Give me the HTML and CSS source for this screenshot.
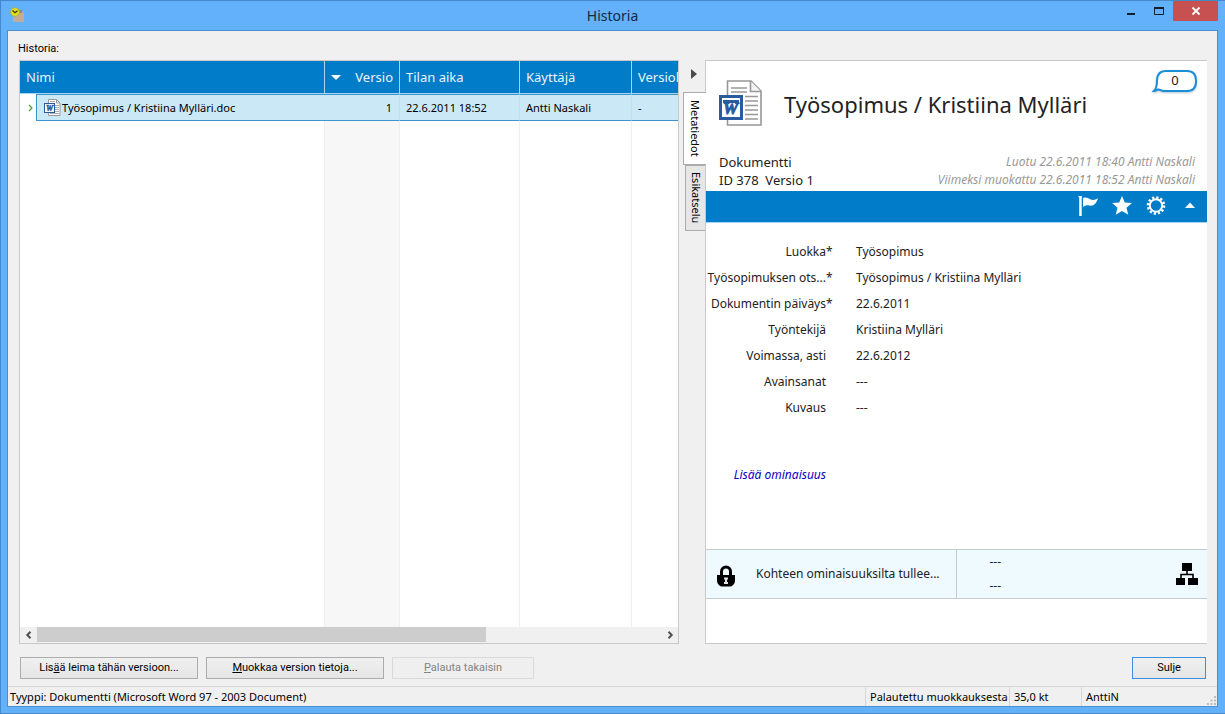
FILE: index.html
```
<!DOCTYPE html>
<html lang="fi">
<head>
<meta charset="utf-8">
<title>Historia</title>
<link rel="stylesheet" href="styles.css">
</head>
<body>
<div class="window">
  <header class="titlebar">
    <svg class="app-icon" viewBox="0 0 16 16" aria-hidden="true">
      <path d="M4 5h11v10H4z" fill="#c4ab98"/><path d="M10 3h3v3h-3z" fill="#8c8a82"/>
      <circle cx="6" cy="5" r="4.300" fill="#e3dd1f" stroke="#b5b02a" stroke-width=".8"/>
      <path d="M3.500 3.500L6 5.800l2.500-2" fill="none" stroke="#3b3b10" stroke-width="1.200"/>
    </svg>
    <h1 class="window-title">Historia</h1>
    <div class="window-controls">
      <button class="control" aria-label="Pienennä"><svg class="control-icon" viewBox="0 0 12 10"><path d="M2 7h8v2H2z" fill="#12202e"/></svg></button>
      <button class="control" aria-label="Suurenna"><svg class="control-icon" viewBox="0 0 12 10"><path d="M1.500 1.500h9v7h-9z" fill="none" stroke="#12202e"/><path d="M1 1h10v2H1z" fill="#12202e"/></svg></button>
      <button class="control control-close" aria-label="Sulje ikkuna"><svg class="control-icon" viewBox="0 0 12 10"><path d="M2.500 1.500l7 7M9.500 1.500l-7 7" stroke="#fff" stroke-width="1.800"/></svg></button>
    </div>
  </header>
  <main class="client">
    <h2 class="list-label" id="list-label">Historia:</h2>
    <div class="panes">
      <section class="list-pane" aria-labelledby="list-label">
        <table class="history">
          <colgroup><col class="col-name"><col class="col-version"><col class="col-time"><col class="col-user"><col></colgroup>
          <thead>
            <tr><th>Nimi</th><th><span class="sorted"><svg class="sort-icon" viewBox="0 0 10 5"><path d="M0 0h10L5 5z" fill="#fff"/></svg>Versio</span></th><th>Tilan aika</th><th>Käyttäjä</th><th>Versiol</th></tr>
          </thead>
          <tbody>
            <tr class="selected">
              <td class="name-cell"><div class="name-row">
                <button class="expander" aria-label="Laajenna"><svg class="expander-icon" viewBox="0 0 5 8"><path d="M1 1l3 3-3 3" fill="none" stroke="#4f9a2c" stroke-width="1.200"/></svg></button>
                <div class="name">
                  <svg class="doc-small" viewBox="0 0 17 17" aria-hidden="true">
                    <path d="M4.500.5h8l3.500 3.500v12.500H4.500z" fill="#fff" stroke="#9a9a9a"/><path d="M12.500.5V4H16" fill="none" stroke="#9a9a9a"/>
                    <path d="M6 2.500h5M11 6.500h4M11 8.500h4M11 10.500h4M11 12.500h4M6 14.500h9" stroke="#aaa"/>
                    <rect x=".5" y="4.500" width="10" height="9" fill="#fff" stroke="#2c5a9f"/>
                    <text x="5.500" y="12" text-anchor="middle" class="doc-mark-small">W</text>
                  </svg>
                  <span>Työsopimus / Kristiina Mylläri.doc</span>
                </div></div></td>
              <td class="number">1</td><td>22.6.2011 18:52</td><td>Antti Naskali</td><td>-</td>
            </tr>
            <tr class="filler"><td></td><td></td><td></td><td></td><td></td></tr>
          </tbody>
        </table>
        <div class="scrollbar">
          <button class="scroll-button" aria-label="Vieritä vasemmalle"><svg class="scroll-icon" viewBox="0 0 8 8"><path d="M5.500 .8L2.300 4l3.200 3.200" fill="none" stroke="#505050" stroke-width="2"/></svg></button>
          <div class="scroll-track"><div class="scroll-thumb"></div></div>
          <button class="scroll-button" aria-label="Vieritä oikealle"><svg class="scroll-icon" viewBox="0 0 8 8"><path d="M2.500 .8L5.700 4 2.500 7.200" fill="none" stroke="#505050" stroke-width="2"/></svg></button>
        </div>
      </section>
      <nav class="tabs" aria-label="Paneelit">
        <button class="collapse" aria-label="Piilota paneeli"><svg class="collapse-icon" viewBox="0 0 6 10"><path d="M0 0l6 5-6 5z" fill="#4c4c4c"/></svg></button>
        <button class="tab tab-active">Metatiedot</button>
        <button class="tab">Esikatselu</button>
      </nav>
      <section class="card">
        <div class="card-head">
          <div class="card-top">
            <svg class="doc-large" viewBox="0 0 44 46" aria-hidden="true">
              <path d="M8.500 1H32l10 10v34H8.500z" fill="#fff" stroke="#979797" stroke-width="1.600"/>
              <path d="M31.500 1v10.500H42" fill="#f4f4f4" stroke="#979797" stroke-width="1.600"/>
              <path d="M12 8h16M12 12h16M26 16.500h13M26 21h13M26 25.500h13M26 30h13M26 34.500h13M26 39h13" stroke="#999" stroke-width="1.500"/>
              <rect x="0" y="15" width="24" height="25" fill="#2c5a9f"/>
              <rect x="3" y="18" width="18" height="19" fill="#fff"/>
              <rect x="4" y="20" width="16" height="3" fill="#2c5a9f"/>
              <text x="11.500" y="34" text-anchor="middle" class="doc-mark">W</text>
            </svg>
            <h2 class="card-title">Työsopimus / Kristiina Mylläri</h2>
            <button class="comments"><svg class="bubble" viewBox="0 0 46 26" aria-hidden="true"><path d="M14 2h21c6 0 9 4 9 10s-3 10-9 10H12c-3 0-4-2-6-1.500-1.500.5-2 1.500-4 1.500C5 19 5 16 5 12 5 6 8 2 14 2z" fill="#fff" stroke="#1a8fd8" stroke-width="2"/></svg><span class="comment-count">0</span></button>
          </div>
          <div class="card-info">
            <p class="card-id">Dokumentti<br>ID 378&nbsp; Versio 1</p>
            <p class="card-dates">Luotu 22.6.2011 18:40 Antti Naskali<br>Viimeksi muokattu 22.6.2011 18:52 Antti Naskali</p>
          </div>
        </div>
        <div class="toolbar">
          <button class="tool" aria-label="Lippu"><svg class="tool-icon" viewBox="0 0 20 22"><path d="M.5 1H4v1.200h-.3V21H1.200V2.200H.5z" fill="#fff"/><path d="M5 3c3-1 5 0 7 1.200 3 1.200 5 .8 8-1-1 4-4 8-8 7.500C9 10 8 10 5 12z" fill="#fff"/></svg></button>
          <button class="tool" aria-label="Suosikki"><svg class="tool-icon" viewBox="0 0 20 22"><path d="M10 1l2.800 6.500 7.200.6-5.500 4.700 1.800 6.900L10 16l-6.300 3.700 1.800-6.900L0 8.100l7.200-.6z" fill="#fff"/></svg></button>
          <button class="tool" aria-label="Asetukset"><svg class="tool-icon" viewBox="0 0 20 22"><circle cx="10" cy="10.500" r="6.200" fill="none" stroke="#fff" stroke-width="2"/><circle cx="10" cy="10.500" r="8" fill="none" stroke="#fff" stroke-width="2.600" stroke-dasharray="2.200 1.990"/></svg></button>
          <button class="tool" aria-label="Tiivistä"><svg class="tool-icon" viewBox="0 0 20 22"><path d="M5 13l5-5.500 5 5.500z" fill="#fff"/></svg></button>
        </div>
        <div class="properties">
          <dl class="property-list">
            <dt>Luokka</dt><dd class="mark">*</dd><dd>Työsopimus</dd>
            <dt>Työsopimuksen ots...</dt><dd class="mark">*</dd><dd>Työsopimus / Kristiina Mylläri</dd>
            <dt>Dokumentin päiväys</dt><dd class="mark">*</dd><dd>22.6.2011</dd>
            <dt>Työntekijä</dt><dd class="mark"></dd><dd>Kristiina Mylläri</dd>
            <dt>Voimassa, asti</dt><dd class="mark"></dd><dd>22.6.2012</dd>
            <dt>Avainsanat</dt><dd class="mark"></dd><dd>---</dd>
            <dt>Kuvaus</dt><dd class="mark"></dd><dd>---</dd>
          </dl>
          <a class="add-property" href="#add">Lisää ominaisuus</a>
        </div>
        <div class="summary">
          <div class="permissions">
            <svg class="lock" viewBox="0 0 20 24" aria-hidden="true"><path d="M5.500 12V7.500a4.500 4.500 0 0 1 9 0V12" fill="none" stroke="#000" stroke-width="3"/><path d="M1 11h18v5a8 7 0 0 1-4 6.500H5A8 7 0 0 1 1 16z" fill="#000"/><path d="M8 13.500h4v2h-1V18h1v2H8v-2h1v-2.500H8z" fill="#d8e4e8"/></svg>
            <span>Kohteen ominaisuuksilta tullee...</span>
          </div>
          <div class="workflow">
            <div class="workflow-text"><span>---</span><span>---</span></div>
            <svg class="workflow-icon" viewBox="0 0 22 22" aria-hidden="true"><path d="M6 0h10v8H6zM0 15h9v7H0zM12 15h10v7H12z"/><path d="M11 8v3.500M5 15v-3.500h12V15" fill="none" stroke="#000" stroke-width="1.600"/></svg>
          </div>
        </div>
        <div class="card-foot"></div>
      </section>
    </div>
    <div class="actions">
      <button class="action">Lis<u>ä</u>ä leima tähän versioon...</button>
      <button class="action"><u>M</u>uokkaa version tietoja...</button>
      <button class="action action-short" disabled><u>P</u>alauta takaisin</button>
      <button class="action action-close">Sulje</button>
    </div>
    <footer class="status">
      <span class="status-type">Tyyppi: Dokumentti (Microsoft Word 97 - 2003 Document)</span>
      <span class="status-cell status-state">Palautettu muokkauksesta</span>
      <span class="status-cell status-size">35,0 kt</span>
      <span class="status-cell status-user">AnttiN</span>
      <svg class="grip" viewBox="0 0 10 10" aria-hidden="true"><path d="M7 0h2v2H7zM3.500 3.500h2v2h-2zM7 3.500h2v2H7zM0 7h2v2H0zM3.500 7h2v2h-2zM7 7h2v2H7z" fill="#bdbdbd"/></svg>
    </footer>
  </main>
</div>
</body>
</html>
```
FILE: styles.css
```
* { box-sizing: border-box; }
body {
  margin: 0;
  font-family: "Noto Sans", "Open Sans", sans-serif;
  font-size: 12px;
  line-height: 18px;
  color: #000;
}
button {
  font: inherit;
  color: inherit;
  background: none;
  border: 0;
  padding: 0;
  margin: 0;
}
h1, h2, p, dl, dd { margin: 0; font-weight: 400; }
svg { display: block; }

.window {
  height: 100vh;
  display: flex;
  flex-direction: column;
  padding: 0 7px 6px 6px;
  background: #63b1fb;
  border: 1px solid #4589c8;
  border-width: 1px 0 1px 1px;
}
.titlebar {
  display: grid;
  grid-template-columns: 1fr auto 1fr;
  height: 29px;
}
.app-icon { width: 16px; height: 16px; margin: 6px 0 0 2px; }
.window-title { font-size: 14px; line-height: 29px; color: #102a43; }
.window-controls { display: flex; justify-content: flex-end; }
.control {
  width: 28px;
  height: 20px;
  display: flex;
  align-items: center;
  justify-content: center;
}
.control-close { width: 45px; background: #c75050; }
.control-icon { width: 12px; height: 10px; }

.client {
  flex: 1;
  min-height: 0;
  display: flex;
  flex-direction: column;
  background: #f0f0f0;
  border: 1px solid #4a8fd0;
}
.list-label {
  margin: 9px 10px 2px;
  font-family: Roboto, "Noto Sans", sans-serif;
  font-size: 11px;
  line-height: 18px;
}
.panes {
  flex: 1;
  min-height: 0;
  display: flex;
  margin: 0 10px 0 11px;
}
.list-pane {
  flex: 1 1 660px;
  min-width: 0;
  display: grid;
  grid-template-rows: 1fr auto;
  background: #fff;
  border: 1px solid #c8c8c8;
}
.history {
  width: 100%;
  height: 100%;
  table-layout: fixed;
  border-collapse: separate;
  border-spacing: 0;
  font-size: 11px;
}
.col-name { width: 305px; }
.col-version { width: 75px; }
.col-time { width: 120px; }
.col-user { width: 112px; }
.history th {
  height: 33px;
  padding: 0 6px;
  font-size: 13px;
  font-weight: 400;
  text-align: left;
  white-space: nowrap;
  overflow: hidden;
  color: #eaf5fc;
  background: #007cc8;
  border-right: 1px solid #a9d3ee;
  border-bottom: 1px solid #a9d3ee;
}
.history th:last-child { padding-right: 0; border-right: 0; }
.sorted { display: flex; align-items: center; justify-content: space-between; }
.sort-icon { width: 10px; height: 5px; }
.history td { padding: 0 6px; border-right: 1px solid #eceff6; }
.history td:last-child { border-right: 0; }
.history td:nth-child(2) { background: #f7f7f7; }
.history .selected td {
  height: 27px;
  background: #cbe8f6;
  border-top: 1px solid #3a96cc;
  border-bottom: 1px solid #3a96cc;
  border-right-color: #c3e0ef;
}
.history .selected .name-cell { padding: 0; border: 0; background: #fff; }
.history .number { padding-right: 7px; text-align: right; }
.name-row { display: flex; }
.expander { width: 16px; display: flex; align-items: center; justify-content: center; }
.expander-icon { width: 5px; height: 8px; margin-left: 5px; }
.name {
  flex: 1;
  height: 27px;
  display: flex;
  align-items: center;
  gap: 1px;
  padding-left: 7px;
  white-space: nowrap;
  background: #cbe8f6;
  border: 1px solid #3a96cc;
  border-right: 0;
}
.doc-small { width: 17px; height: 17px; }
.doc-mark { font: italic bold 17px "Liberation Serif", serif; fill: #2c5a9f; stroke: #2c5a9f; }
.doc-mark-small { font: italic bold 8px "Liberation Serif", serif; fill: #2c5a9f; stroke: #2c5a9f; stroke-width: .5px; }
.scrollbar { display: flex; height: 16px; background: #f0f0f0; }
.scroll-button { width: 17px; display: flex; align-items: center; justify-content: center; }
.scroll-icon { width: 8px; height: 8px; }
.scroll-track { flex: 1; }
.scroll-thumb { width: 72%; height: 15px; background: #cdcdcd; }

.tabs {
  width: 26px;
  display: flex;
  flex-direction: column;
  align-items: flex-end;
}
.collapse { height: 32px; padding: 0 8px 4px; display: flex; align-items: center; }
.collapse-icon { width: 6px; height: 10px; }
.tab {
  width: 20px;
  height: 66px;
  writing-mode: vertical-rl;
  font-size: 11px;
  line-height: 18px;
  background: #e6e6e6;
  border: 1px solid #acacac;
  border-right: 0;
}
.tab-active {
  position: relative;
  width: 23px;
  height: 73px;
  margin-right: -1px;
  background: #fff;
}

.card {
  flex: 0 1 502px;
  min-width: 0;
  display: flex;
  flex-direction: column;
  background: #fff;
  border: 1px solid #c8c8c8;
  border-right: 0;
  color: #222;
}
.card-head { padding: 8px 12px 0; }
.card-top { display: flex; height: 84px; }
.doc-large { width: 44px; height: 46px; margin: 11px 21px 0 1px; }
.card-title { flex: 1; font-size: 22px; line-height: 70px; white-space: nowrap; }
.comments { position: relative; width: 46px; height: 26px; margin-right: -3px; }
.bubble { width: 46px; height: 26px; filter: drop-shadow(0 1px 1px #b8c4cc); }
.comment-count { position: absolute; inset: 0; font-size: 13px; line-height: 23px; }
.card-info { display: flex; justify-content: space-between; padding-left: 1px; height: 38px; }
.card-id { font-size: 13px; white-space: nowrap; }
.card-dates { font-style: italic; text-align: right; color: #999; white-space: nowrap; }
.toolbar {
  display: flex;
  justify-content: flex-end;
  gap: 14px;
  height: 32px;
  padding: 4px 7px 0;
  background: #007cc8;
  border-bottom: 1px solid #a9d3ee;
}
.tool, .tool-icon { width: 20px; height: 22px; }

.properties { flex: 1; padding-top: 16px; font-size: 12px; }
.property-list {
  display: grid;
  grid-template-columns: 120px 30px 1fr;
  grid-auto-rows: 26px;
  line-height: 26px;
  white-space: nowrap;
}
.property-list dt { display: flex; justify-content: flex-end; }
.add-property {
  display: block;
  width: 120px;
  margin-top: 41px;
  line-height: 26px;
  font-style: italic;
  text-align: right;
  text-decoration: none;
  color: #0c00c4;
  white-space: nowrap;
}
.summary {
  display: flex;
  height: 50px;
  background: #eefaff;
  border: 1px solid #c4ccd0;
  border-width: 1px 0;
}
.permissions {
  flex: 1 1 0;
  min-width: 0;
  display: flex;
  align-items: center;
  gap: 20px;
  padding-left: 10px;
  white-space: nowrap;
  border-right: 1px solid #c4ccd0;
}
.lock { width: 20px; height: 24px; margin-top: 4px; }
.workflow {
  flex: 1 1 0;
  min-width: 0;
  display: flex;
  align-items: center;
  justify-content: space-between;
  padding: 0 9px 0 33px;
}
.permissions, .workflow { width: 50%; flex: none; }
.workflow-text { display: flex; flex-direction: column; line-height: 24px; }
.workflow-icon { width: 22px; height: 22px; }
.card-foot { height: 44px; }

.actions {
  display: flex;
  gap: 8px;
  padding: 13px 11px 7px 12px;
  font-family: Roboto, "Noto Sans", sans-serif;
  font-size: 11px;
}
.action {
  width: 178px;
  height: 22px;
  line-height: 18px;
  background: linear-gradient(#f0f0f0, #e5e5e5);
  border: 1px solid #acacac;
}
.action-short { width: 142px; }
.action:disabled { color: #838383; background: #efefef; border-color: #d9d9d9; }
.action-close { width: 74px; margin-left: auto; border: 1px solid #3c8fd8; }

.status { display: flex; height: 20px; font-size: 11px; line-height: 19px; border-top: 1px solid #d7d7d7; white-space: nowrap; }
.status-type { flex: 1; padding-left: 2px; }
.status-cell { padding-left: 4px; border-left: 1px solid #d7d7d7; }
.status-state { width: 144px; }
.status-size { width: 72px; }
.status-user { width: 126px; }
.grip { width: 10px; height: 10px; align-self: flex-end; }
```
